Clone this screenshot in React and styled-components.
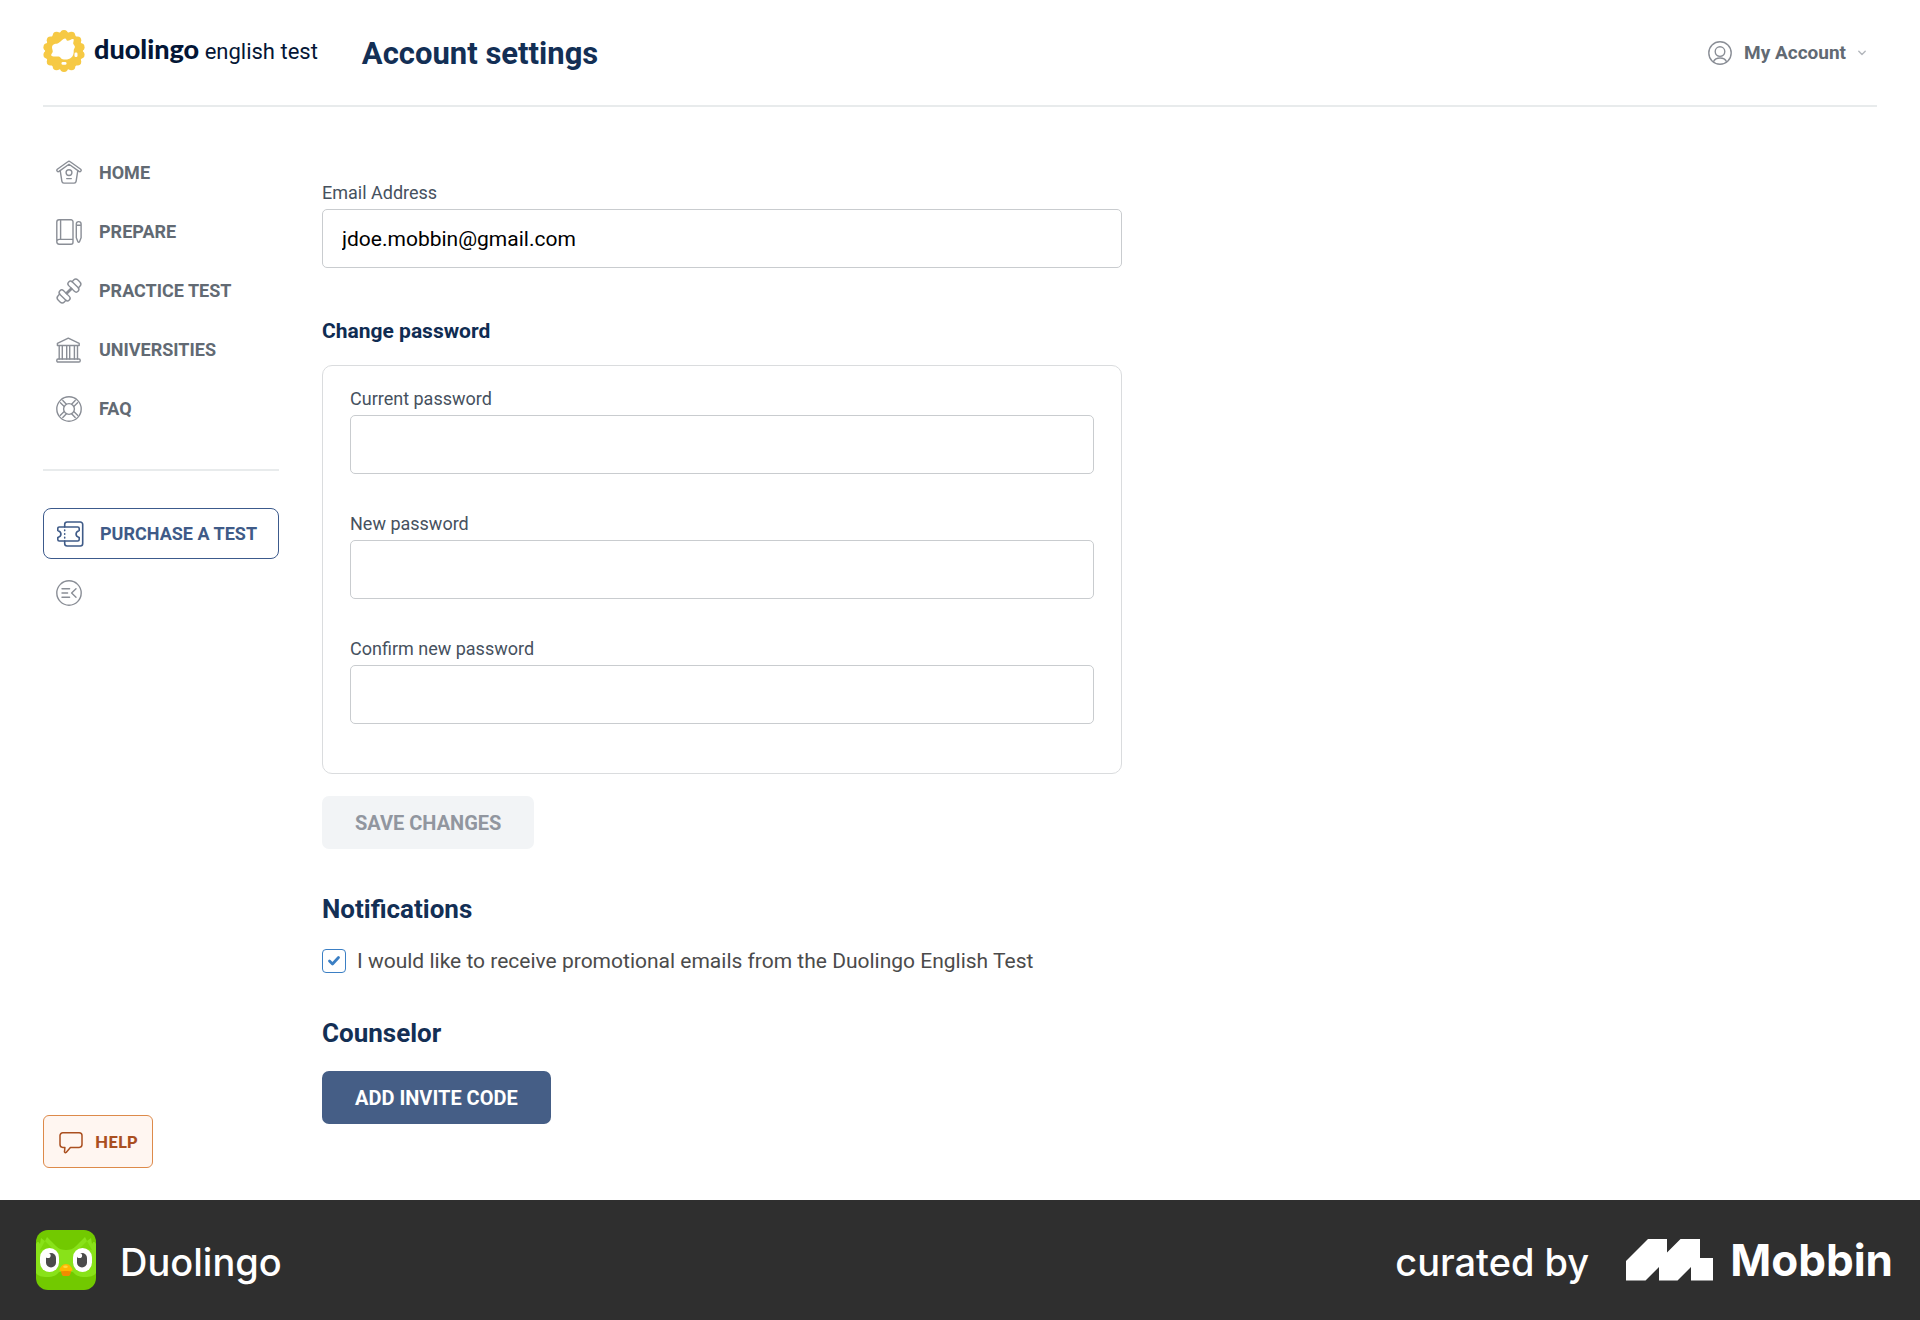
import React from 'react';
import styled, { createGlobalStyle } from 'styled-components';

const GlobalStyle = createGlobalStyle`
  *, *::before, *::after { box-sizing: border-box; }
  body {
    margin: 0;
    background: #fff;
    color: #3c4652;
    font-family: Roboto, "Liberation Sans", sans-serif;
    font-size: 20px;
    line-height: 24px;
  }
  button, input { font: inherit; }
  h1, h2, h3 { margin: 0; }
`;

const Page = styled.div`
  min-height: 100vh;
  display: flex;
  flex-direction: column;
`;

const Header = styled.header`
  display: flex;
  align-items: center;
  margin: 0 43px;
  height: 107px;
  border-bottom: 2px solid #e8ebec;
`;

const LogoLink = styled.a`
  display: flex;
  align-items: center;
  gap: 9px;
  padding-bottom: 4px;
  color: #041636;
  text-decoration: none;
  white-space: nowrap;
`;

const Wordmark = styled.span`
  font-size: 22px;
  line-height: 30px;
`;

const Brand = styled.strong`
  font-family: Lato, sans-serif;
  font-size: 27px;
  font-weight: 900;
`;

const PageTitle = styled.h1`
  margin-left: 44px;
  padding-top: 2px;
  color: #132f55;
  font-size: 31px;
  font-weight: 700;
  line-height: 36px;
`;

const AccountButton = styled.button`
  display: flex;
  align-items: center;
  gap: 12px;
  margin-left: auto;
  padding: 0 11px;
  border: 0;
  background: none;
  color: #626a73;
  font-size: 19px;
  font-weight: 700;
  cursor: pointer;
`;

const Body = styled.div`
  flex: 1;
  display: grid;
  grid-template-columns: 236px minmax(0, 800px);
  column-gap: 43px;
  padding: 0 43px;
`;

const Sidebar = styled.aside`
  display: flex;
  flex-direction: column;
  align-items: flex-start;
  padding: 36px 0 32px;
`;

const NavList = styled.ul`
  align-self: stretch;
  margin: 0;
  padding: 0 0 31px;
  border-bottom: 2px solid #e8ebec;
  list-style: none;
`;

const NavLink = styled.a`
  display: flex;
  align-items: center;
  gap: 17px;
  height: 59px;
  padding-left: 13px;
  color: #626a73;
  font-size: 18px;
  font-weight: 700;
  text-decoration: none;
  text-transform: uppercase;
`;

const Icon = styled.svg`
  flex: none;
  display: block;
  fill: none;
  stroke: ${(p) => p.$color || 'currentColor'};
  stroke-width: ${(p) => p.$weight || 1.4};
  stroke-linecap: round;
  stroke-linejoin: round;
`;

const PurchaseButton = styled.button`
  align-self: stretch;
  display: flex;
  align-items: center;
  gap: 16px;
  height: 51px;
  margin-top: 37px;
  padding: 0 13px;
  border: 1px solid #3c5a8c;
  border-radius: 8px;
  background: #fff;
  color: #3f5b88;
  font-size: 18px;
  font-weight: 700;
  white-space: nowrap;
  cursor: pointer;
`;

const CollapseButton = styled.button`
  margin: 21px 0 0 13px;
  padding: 0;
  border: 0;
  background: none;
  color: #8a8e96;
  cursor: pointer;
`;

const HelpButton = styled.button`
  display: flex;
  align-items: center;
  gap: 12px;
  height: 53px;
  margin-top: auto;
  padding: 0 15px;
  border: 1px solid #dd8a4a;
  border-radius: 6px;
  background: #fff6f1;
  color: #aa4f1f;
  font-family: Lato, sans-serif;
  font-size: 17px;
  font-weight: 900;
  cursor: pointer;
`;

const Content = styled.main`
  display: flex;
  flex-direction: column;
  align-items: flex-start;
  padding: 75px 0;
`;

const Form = styled.form`
  align-self: stretch;
`;

const Field = styled.div`
  display: flex;
  flex-direction: column;
  gap: 5px;
`;

const Label = styled.label`
  color: #46515e;
  font-size: 18px;
  line-height: 22px;
`;

const TextInput = styled.input`
  width: 100%;
  height: 59px;
  padding: 0 19px;
  border: 1px solid #c9cccf;
  border-radius: 5px;
  background: #fff;
  color: #000;
  font-size: 21px;
`;

const GroupTitle = styled.h3`
  margin: 51px 0 22px;
  color: #0f2c52;
  font-size: 21px;
  font-weight: 700;
  line-height: 24px;
`;

const PasswordCard = styled.div`
  display: flex;
  flex-direction: column;
  gap: 39px;
  padding: 22px 27px 49px;
  border: 1px solid #dadcde;
  border-radius: 10px;
`;

const ActionButton = styled.button`
  height: 53px;
  margin-top: 22px;
  padding: 0 33px;
  border: 0;
  border-radius: 7px;
  background: ${(p) => (p.$primary ? '#455e86' : '#f2f4f6')};
  color: ${(p) => (p.$primary ? '#fff' : '#91969f')};
  font-size: 20px;
  font-weight: 700;
  cursor: pointer;
`;

const SectionTitle = styled.h2`
  margin-top: 44px;
  color: #132f55;
  font-size: 26px;
  font-weight: 700;
  line-height: 32px;
`;

const CheckLabel = styled.label`
  display: flex;
  align-items: center;
  gap: 11px;
  margin-top: 24px;
  color: #4b4b4b;
  font-size: 21px;
  line-height: 24px;
`;

const CheckControl = styled.span`
  display: grid;
  place-items: center;

  > * { grid-area: 1 / 1; }
  > svg { pointer-events: none; z-index: 1; }
`;

const CheckInput = styled.input`
  appearance: none;
  width: 24px;
  height: 24px;
  margin: 0;
  border: 1px solid #3b7fc4;
  border-radius: 4px;
  background: #fff;

  &:not(:checked) + svg { visibility: hidden; }
`;

const Footer = styled.footer`
  display: flex;
  align-items: center;
  justify-content: space-between;
  height: 120px;
  padding: 0 27px 0 36px;
  background: #2f2f2f;
  color: #fff;
  font-family: Inter, sans-serif;
  font-size: 38px;
  font-weight: 500;
  line-height: 48px;
`;

const FooterGroup = styled.div`
  display: flex;
  align-items: center;
  gap: ${(p) => p.$gap}px;
`;

const FooterText = styled.span`
  padding-top: 4px;
`;

const MobbinLink = styled.a`
  display: flex;
  align-items: center;
  gap: 17px;
  color: inherit;
  font-size: 44px;
  font-weight: 700;
  text-decoration: none;
`;

const GREY = '#8a8e96';

const HomeIcon = () => (
  <Icon width="26" height="26" viewBox="0 0 26 26" $color={GREY} aria-hidden="true">
    <path d="M1.3 9.2 11.8 1.7a2 2 0 0 1 2.4 0l10.5 7.5a1.4 1.4 0 0 1-1.7 2.2L13 4.3 3 11.4a1.4 1.4 0 0 1-1.7-2.2Z" />
    <path d="m4.2 10.6 1.7 10.8a2 2 0 0 0 2 1.7h10.2a2 2 0 0 0 2-1.7l1.700-10.800" />
    <circle cx="13" cy="12.6" r="2.9" />
    <path d="M10.7 18.6h4.6" />
  </Icon>
);

const PrepareIcon = () => (
  <Icon width="26" height="26" viewBox="0 0 26 26" $color={GREY} aria-hidden="true">
    <path d="M3 .8h12a2 2 0 0 1 2 2v17.6H3.2a2.4 2.4 0 0 0 0 4.8H15a2 2 0 0 0 2-2v-2.8M.8 22.8V3A2.2 2.2 0 0 1 3 .8M4.6 1v19.3" />
    <path d="M20.300 5a2.400 2.400 0 0 1 4.800 0v13.800l-1.600 4a.9.9 0 0 1-1.600 0l-1.600-4ZM20.300 6.300h4.800" />
  </Icon>
);

const DumbbellIcon = () => (
  <Icon width="26" height="26" viewBox="0 0 26 26" $color={GREY} overflow="visible" aria-hidden="true">
    <g transform="rotate(-45 13 13)">
      <path d="M9.400 12.300h7.200M9.400 13.700h7.200" />
      <rect x="4.200" y="6.400" width="5.200" height="13.200" rx="2.600" />
      <rect x="16.600" y="6.400" width="5.200" height="13.200" rx="2.600" />
      <path d="M4.200 8.600H2A3 3 0 0 0-1 11.600v2.800a3 3 0 0 0 3 3h2.200M21.800 8.600H24a3 3 0 0 1 3 3v2.800a3 3 0 0 1-3 3h-2.200" />
    </g>
  </Icon>
);

const UniversityIcon = () => (
  <Icon width="26" height="26" viewBox="0 0 26 26" $color={GREY} aria-hidden="true">
    <path d="M1.4 8.5V6.4L12.3 1.2 23.2 6.4v2.1ZM3.2 8.6V22M6.3 8.6V22M10.700 8.600V22M13.700 8.600V22M18.400 8.600V22M21.500 8.600V22" />
    <rect x=".8" y="22" width="23.4" height="3" rx="1.2" />
  </Icon>
);

const FaqIcon = () => (
  <Icon width="26" height="26" viewBox="0 0 26 26" $color={GREY} aria-hidden="true">
    <circle cx="13" cy="13" r="12.2" />
    <circle cx="13" cy="13" r="5.4" />
    {[0, 90, 180, 270].map((turn) => (
      <path key={turn} transform={`rotate(${turn} 13 13)`} d="M15.600 8.200 19.200 4.400M17.800 10.400l3.800-3.600" />
    ))}
  </Icon>
);

const TicketIcon = () => (
  <Icon width="27" height="26" viewBox="0 0 27 26" $weight={1.6} aria-hidden="true">
    <path d="M7.7 6V3.4A2.4 2.4 0 0 1 10.1 1h13.2a2.4 2.4 0 0 1 2.4 2.4v19.2a2.4 2.4 0 0 1-2.4 2.4H10.1a2.4 2.4 0 0 1-2.4-2.4V20" />
    <path d="M2.2 6h18.6a1.4 1.4 0 0 1 1.4 1.4v2c-4.2 1.4-4.2 5.8 0 7.2v2a1.4 1.4 0 0 1-1.4 1.4H2.2A1.4 1.4 0 0 1 .8 18.6v-2c4.2-1.4 4.2-5.8 0-7.2v-2A1.4 1.4 0 0 1 2.2 6Z" />
    <path d="M7.7 9v.6M7.7 12.7v.6M7.7 16.4v.6" />
  </Icon>
);

const CollapseIcon = () => (
  <Icon width="26" height="26" viewBox="0 0 26 26" aria-hidden="true">
    <circle cx="13" cy="13" r="12.2" />
    <path d="M6 8.8h7.6M6 13h5.6M6 17.2h7.6M20 8.8 15.6 13l4.4 4.2" />
  </Icon>
);

const ChatIcon = () => (
  <Icon width="24" height="24" viewBox="0 0 24 24" $weight={1.5} aria-hidden="true">
    <path d="M3.8 2.8h16.4a2.8 2.8 0 0 1 2.8 2.8v9a2.8 2.8 0 0 1-2.8 2.8h-8.8l-4.3 5a.9.9 0 0 1-1.6-.7l.4-4.3H3.8A2.8 2.8 0 0 1 1 14.6V5.6a2.8 2.8 0 0 1 2.8-2.8Z" />
  </Icon>
);

const PersonIcon = () => (
  <Icon width="24" height="24" viewBox="0 0 24 24" $color={GREY} aria-hidden="true">
    <circle cx="12" cy="12" r="11.2" />
    <circle cx="12" cy="10.6" r="4.8" />
    <path d="M5.4 20.8c1.2-2.6 3.7-3.8 6.6-3.8s5.4 1.2 6.6 3.8" />
  </Icon>
);

const ChevronIcon = () => (
  <Icon width="8" height="6" viewBox="0 0 8 6" $color="#b4b8bd" aria-hidden="true">
    <path d="m.8 1.2 3.2 3.4 3.2-3.4" />
  </Icon>
);

const BadgeLogo = () => (
  <svg width="42" height="42" viewBox="0 0 42 42" aria-hidden="true">
    <g fill="#f6c944">
      <circle cx="21" cy="21" r="19" />
      {Array.from({ length: 14 }, (_, i) => {
        const angle = (i * 2 * Math.PI) / 14 - Math.PI / 2;
        return <circle key={i} cx={21 + 17.2 * Math.cos(angle)} cy={21 + 17.2 * Math.sin(angle)} r="3.8" />;
      })}
    </g>
    <g fill="#fff">
      <path d="M8.3 25.5c-.6-1 .8-2 1.3-3.2.8-1.7-1.3-4.3-.3-6.4 1-2.500 3.700-1.700 6.200-3 2.400-1.200 4.600-4.500 6.500-4.400 1.500 0 1.200 2.200 2.600 2.300 1.600.1 4-2.300 5.600-1.800 1.400.6-.4 3.400.2 5.100.4 1.400 1.700 1.600 1.500 3-.2 1.500-1.300 2-1.200 3.800.1 2.300-.4 5-2.400 6.600-1.600 1.400-3.600 2-5.800 2.100-2.300 0-3.900 0-4.900-1.800-.8-1.400-2-1.500-4.400-1.300-2.100.2-4.200.2-4.900-1Z" />
      <rect x="31.5" y="22.5" width="3" height="4.5" rx="1.2" />
      <rect x="18.5" y="32" width="5" height="2.8" rx="1.3" />
    </g>
  </svg>
);

const OwlLogo = () => (
  <svg width="60" height="60" viewBox="0 0 60 60" aria-hidden="true">
    <rect width="60" height="60" rx="12" fill="#72c900" />
    <path d="M0 14c2-3 2-3 4 0L5 8l4 3 2-4 9 9c3 3 6 4 10 4s7-1 10-4l9-9 2 4 4-3 1 6c2-3 2-3 4 0v29c-2 3-6 4-11 4-6 0-10-2-12-5H23c-2 3-6 5-12 5-5 0-9-1-11-4Z" fill="#89e219" />
    <path d="M9 11 4 20l12-2ZM51 11l5 9-12-2Z" fill="#7cd60a" />
    <rect x="4" y="18" width="19" height="24" rx="9.5" fill="#fff" />
    <rect x="37" y="18" width="19" height="24" rx="9.5" fill="#fff" />
    <rect x="10" y="23" width="10" height="14.5" rx="5" fill="#4b4b4b" />
    <rect x="41" y="23" width="10" height="14.5" rx="5" fill="#4b4b4b" />
    <circle cx="12" cy="25.5" r="2.6" fill="#fff" />
    <circle cx="43.5" cy="25.5" r="2.6" fill="#fff" />
    <path d="M24.5 40h11l-1.500 5a2 2 0 0 1-2 1h-4a2 2 0 0 1-2-1Z" fill="#f48b00" />
    <path d="M23.5 40.500c0-3 3-6.500 6.500-6.500s6.500 3.500 6.500 6.500c-2 1-4 .5-6.500.5s-4.500.5-6.500-.5Z" fill="#ffb800" />
    <ellipse cx="29.5" cy="36.7" rx="2.3" ry="1.3" fill="#ffd93b" />
  </svg>
);

const MobbinLogo = () => (
  <svg width="87" height="42" viewBox="0 0 87 42" fill="#fff" aria-hidden="true">
    <path d="M22 0h19v13.5L54.500 0H74v19h13v22.500H65V28L51.500 41.500H33V28L19.500 41.500H0V22Z" />
  </svg>
);

const navItems = [
  ['Home', HomeIcon],
  ['Prepare', PrepareIcon],
  ['Practice test', DumbbellIcon],
  ['Universities', UniversityIcon],
  ['FAQ', FaqIcon],
];

const passwordFields = [
  ['current-password', 'Current password'],
  ['new-password', 'New password'],
  ['confirm-password', 'Confirm new password'],
];

export default function App() {
  return (
    <Page>
      <GlobalStyle />
      <Header>
        <LogoLink href="#">
          <BadgeLogo />
          <Wordmark><Brand>duolingo</Brand> english test</Wordmark>
        </LogoLink>
        <PageTitle>Account settings</PageTitle>
        <AccountButton type="button">
          <PersonIcon />
          My Account
          <ChevronIcon />
        </AccountButton>
      </Header>

      <Body>
        <Sidebar>
          <NavList>
            {navItems.map(([label, Glyph]) => (
              <li key={label}>
                <NavLink href="#"><Glyph />{label}</NavLink>
              </li>
            ))}
          </NavList>
          <PurchaseButton type="button"><TicketIcon />PURCHASE A TEST</PurchaseButton>
          <CollapseButton type="button" aria-label="Collapse menu"><CollapseIcon /></CollapseButton>
          <HelpButton type="button"><ChatIcon />HELP</HelpButton>
        </Sidebar>

        <Content>
          <Form onSubmit={(event) => event.preventDefault()}>
            <Field>
              <Label htmlFor="email">Email Address</Label>
              <TextInput id="email" type="email" defaultValue="jdoe.mobbin@gmail.com" />
            </Field>
            <GroupTitle>Change password</GroupTitle>
            <PasswordCard>
              {passwordFields.map(([id, label]) => (
                <Field key={id}>
                  <Label htmlFor={id}>{label}</Label>
                  <TextInput id={id} type="password" />
                </Field>
              ))}
            </PasswordCard>
            <ActionButton type="submit" disabled>SAVE CHANGES</ActionButton>
          </Form>

          <SectionTitle>Notifications</SectionTitle>
          <CheckLabel>
            <CheckControl>
              <CheckInput type="checkbox" defaultChecked />
              <Icon width="14" height="12" viewBox="0 0 14 12" $color="#3b7fc4" $weight={2.8} aria-hidden="true">
                <path d="m2.5 6 3 3 6-6.500" />
              </Icon>
            </CheckControl>
            I would like to receive promotional emails from the Duolingo English Test
          </CheckLabel>

          <SectionTitle>Counselor</SectionTitle>
          <ActionButton type="button" $primary>ADD INVITE CODE</ActionButton>
        </Content>
      </Body>

      <Footer>
        <FooterGroup $gap={24}>
          <OwlLogo />
          <FooterText>Duolingo</FooterText>
        </FooterGroup>
        <FooterGroup $gap={37}>
          <FooterText>curated by</FooterText>
          <MobbinLink href="#"><MobbinLogo />Mobbin</MobbinLink>
        </FooterGroup>
      </Footer>
    </Page>
  );
}
